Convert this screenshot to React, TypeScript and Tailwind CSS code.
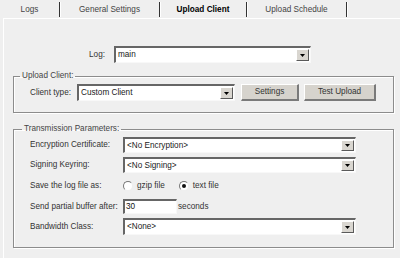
import React from "react";

const TABS = [
  { label: "Logs", w: "w-[60px]", active: false },
  { label: "General Settings", w: "w-[100px]", active: false },
  { label: "Upload Client", w: "w-[87px]", active: true },
  { label: "Upload Schedule", w: "w-[100px]", active: false },
];

function DropArrow() {
  return (
    <div className="my-[1px] mr-[1px] flex w-[13px] items-center justify-center border-t border-l border-t-white border-l-white border-b border-r border-b-[#5a5a5a] border-r-[#5a5a5a] bg-[#d9d6d0]">
      <svg width="5" height="3" viewBox="0 0 5 3">
        <polygon points="0,0 5,0 2.5,3" fill="#000" />
      </svg>
    </div>
  );
}

function Select({ value, w, h }: { value: string; w: string; h: string }) {
  return (
    <div
      className={`flex ${w} ${h} items-stretch border-t-2 border-l-2 border-t-[#666] border-l-[#666] border-b border-r border-b-[#f8f8f8] border-r-[#f8f8f8] bg-white`}
    >
      <div className="flex flex-1 items-center pl-[2px] text-[#1a1a1a]">{value}</div>
      <DropArrow />
    </div>
  );
}

function Button({ label, w }: { label: string; w: string }) {
  return (
    <div
      className={`flex ${w} h-[17px] items-center justify-center border-t border-l border-t-white border-l-white border-b-2 border-r-2 border-b-[#7a7a7a] border-r-[#7a7a7a] bg-[#d6d3cd] text-[#333]`}
    >
      {label}
    </div>
  );
}

function Radio({ checked, label }: { checked: boolean; label: string }) {
  return (
    <div className="flex items-center gap-[4px]">
      <div className="flex h-[10px] w-[10px] items-center justify-center rounded-full border border-t-[#777] border-l-[#777] border-b-[#eee] border-r-[#eee] bg-white">
        {checked && <div className="h-[4px] w-[4px] rounded-full bg-[#111]" />}
      </div>
      <span>{label}</span>
    </div>
  );
}

function Group({
  legend,
  legendOffset,
  className,
  children,
}: {
  legend: string;
  legendOffset: string;
  className: string;
  children: React.ReactNode;
}) {
  return (
    <fieldset
      className={`ml-[9px] w-[381px] border border-[#8c8c8c] shadow-[inset_1px_1px_0_#fff,1px_1px_0_#fff] ${className}`}
    >
      <legend className={`${legendOffset} px-[2px] leading-[10px] text-[#444]`}>{legend}</legend>
      {children}
    </fieldset>
  );
}

export default function App() {
  return (
    <div className="h-[258px] w-[400px] overflow-hidden bg-[#efefef] font-['Tahoma','Liberation_Sans',sans-serif] text-[8.2px] leading-[10px] text-[#2a2a2a]">
      {/* Tabs */}
      <div className="flex h-[18px]">
        {TABS.map((t) => (
          <div
            key={t.label}
            className={`${t.w} mt-[2px] flex h-[15px] items-center justify-center border-r border-r-[#333] shadow-[1px_0_0_#fff] ${
              t.active ? "font-bold text-black" : "text-[#444]"
            }`}
          >
            {t.label}
          </div>
        ))}
      </div>

      <div className="ml-[3px] h-[240px] border-t border-l border-white pt-[27px]">
        {/* Log */}
        <div className="flex h-[17px] items-center">
          <div className="w-[101px] text-right text-[#333]">Log:</div>
          <div className="ml-[9px]">
            <Select value="main" w="w-[197px]" h="h-[17px]" />
          </div>
        </div>

        {/* Upload Client */}
        <Group legend="Upload Client:" legendOffset="ml-[6px]" className="mt-[8px] h-[42px]">
          <div className="mt-[3px] flex items-center pl-[16px]">
            <div className="w-[47px] text-[#333]">Client type:</div>
            <Select value="Custom Client" w="w-[158px]" h="h-[17px]" />
            <div className="ml-[6px]">
              <Button label="Settings" w="w-[58px]" />
            </div>
            <div className="ml-[5px]">
              <Button label="Test Upload" w="w-[72px]" />
            </div>
          </div>
        </Group>

        {/* Transmission Parameters */}
        <Group legend="Transmission Parameters:" legendOffset="ml-[8px]" className="mt-[11px] h-[124px]">
          <div className="mt-[3px] flex flex-col pl-[16px] text-[#333]">
            <div className="flex h-[16px] items-center">
              <div className="w-[93px]">Encryption Certificate:</div>
              <Select value="<No Encryption>" w="w-[233px]" h="h-[16px]" />
            </div>
            <div className="mt-[4px] flex h-[16px] items-center">
              <div className="w-[93px]">Signing Keyring:</div>
              <Select value="<No Signing>" w="w-[233px]" h="h-[16px]" />
            </div>
            <div className="mt-[5px] flex h-[16px] items-center">
              <div className="w-[93px]">Save the log file as:</div>
              <Radio checked={false} label="gzip file" />
              <div className="ml-[14px]">
                <Radio checked label="text file" />
              </div>
            </div>
            <div className="mt-[5px] flex h-[15px] items-center">
              <div className="w-[93px]">Send partial buffer after:</div>
              <div className="flex h-[15px] w-[54px] items-center border-t-2 border-l-2 border-t-[#666] border-l-[#666] border-b border-r border-b-[#f8f8f8] border-r-[#f8f8f8] bg-white pl-[1px] text-[#111]">
                30
              </div>
              <div className="ml-[1px]">seconds</div>
            </div>
            <div className="mt-[4px] flex h-[17px] items-center">
              <div className="w-[93px]">Bandwidth Class:</div>
              <Select value="<None>" w="w-[233px]" h="h-[17px]" />
            </div>
          </div>
        </Group>
      </div>
    </div>
  );
}
